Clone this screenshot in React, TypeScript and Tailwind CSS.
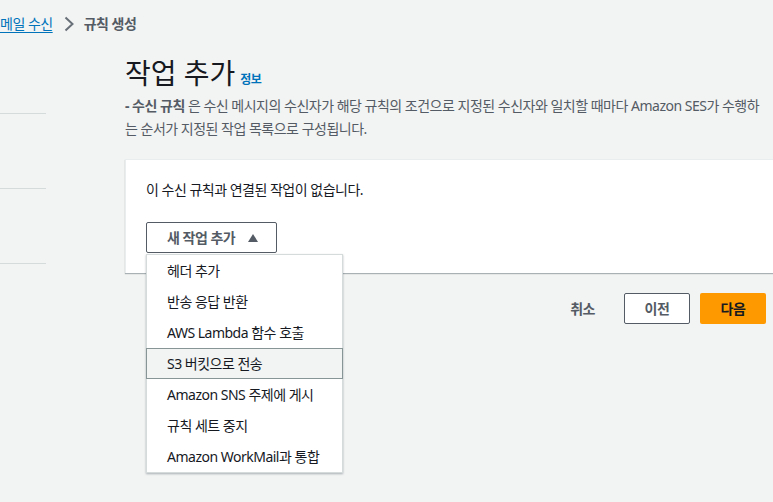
import React from "react";

const actions = [
  "헤더 추가",
  "반송 응답 반환",
  "AWS Lambda 함수 호출",
  "S3 버킷으로 전송",
  "Amazon SNS 주제에 게시",
  "규칙 세트 중지",
  "Amazon WorkMail과 통합",
];

const font = {
  fontFamily: '"Noto Sans", "Noto Sans CJK KR", sans-serif',
};

export default function App() {
  return (
    <div
      className="w-[773px] h-[502px] bg-[#f2f3f3] overflow-hidden text-[#16191f] tracking-[-0.5px]"
      style={font}
    >
      {/* Breadcrumb */}
      <div className="flex items-center h-[20px] mt-[14px] text-[14px] leading-[20px]">
        <a className="text-[#0073bb] underline underline-offset-[3px] decoration-1">메일 수신</a>
        <svg className="ml-[9px] mr-[8px] w-[14px] h-[16px]" viewBox="0 0 14 16" fill="none">
          <path d="M3.5 1.5l7 6.5-7 6.5" stroke="#687078" strokeWidth="2" />
        </svg>
        <span className="font-bold text-[#545b64]">규칙 생성</span>
      </div>

      <div className="flex">
        {/* Left nav remnants */}
        <div className="w-[46px] shrink-0 pt-[5px]">
          <div className="h-[75px] border-b border-[#d5dbdb]" />
          <div className="h-[75px] border-b border-[#d5dbdb]" />
          <div className="h-[75px] border-b border-[#d5dbdb]" />
        </div>

        {/* Main */}
        <div className="ml-[79px] w-[641px] shrink-0">
          <div className="flex items-baseline mt-[21px] gap-[5px]">
            <h1 className="text-[28px] leading-[36px] font-normal tracking-normal text-[#16191f]">작업 추가</h1>
            <a className="text-[12px] font-bold text-[#0073bb]">정보</a>
          </div>
          <p className="mt-[3px] text-[14px] leading-[23px] text-[#545b64] whitespace-nowrap">
            <b className="text-[#545b64]">- 수신 규칙</b> 은 수신 메시지의 수신자가 해당 규칙의 조건으로 지정된 수신자와 일치할 때마다 Amazon SES가 수행하
            <br />는 순서가 지정된 작업 목록으로 구성됩니다.
          </p>

          {/* Card */}
          <div className="relative mt-[19px] w-[660px] bg-white border-l border-t border-[#eaeded] shadow-[0_1px_1px_0_rgba(0,28,36,0.3)] px-[20px] pt-[20px] pb-[20px]">
            <p className="text-[14px] leading-[20px] text-[#16191f]">이 수신 규칙과 연결된 작업이 없습니다.</p>
            <div className="relative mt-[22px] w-[131px]">
              <button className="flex items-center w-[131px] h-[31px] border border-[#545b64] rounded-[2px] bg-white pl-[20px] text-[14px] font-bold text-[#545b64]">
                새 작업 추가
                <svg className="ml-[12px] w-[12px] h-[10px]" viewBox="0 0 12 10">
                  <path d="M6 1l5 8H1z" fill="#545b64" />
                </svg>
              </button>
              <ul className="absolute z-10 left-0 top-[32px] w-[197px] bg-white border border-[#d5dbdb] shadow-[0_1px_2px_rgba(0,28,36,0.3)] py-0">
                {actions.map((a, i) => (
                  <li
                    key={a}
                    className={`h-[31px] flex items-center pl-[20px] text-[14px] ${
                      i === 3 ? "bg-[#f2f3f3] border border-[#879596] -mx-px" : ""
                    }`}
                  >
                    {a}
                  </li>
                ))}
              </ul>
            </div>
          </div>

          {/* Footer */}
          <div className="flex items-center justify-end mt-[20px] gap-[10px]">
            <button className="text-[14px] font-bold text-[#545b64] mr-[19px]">취소</button>
            <button className="w-[66px] h-[31px] rounded-[2px] border border-[#545b64] bg-white text-[14px] font-bold text-[#545b64]">
              이전
            </button>
            <button className="w-[66px] h-[31px] rounded-[2px] bg-[#ff9900] text-[14px] font-bold text-[#16191f]">
              다음
            </button>
          </div>
        </div>
      </div>
    </div>
  );
}
